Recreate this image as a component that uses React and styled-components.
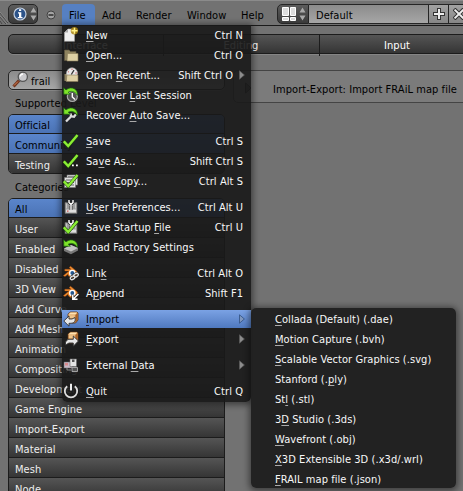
import React from "react";
import styled, { createGlobalStyle, css } from "styled-components";

const Global = createGlobalStyle`
  * { box-sizing: border-box; }
  html, body { margin: 0; background: #727272; overflow: hidden; }
  svg { display: block; flex: none; }
`;

const Screen = styled.div`
  position: relative;
  width: 463px;
  height: 491px;
  overflow: hidden;
  background: #727272;
  color: #000;
  font: 11px/20px "DejaVu Sans Condensed", "DejaVu Sans", sans-serif;
  font-stretch: semi-condensed;
  letter-spacing: 0.06px;
  white-space: nowrap;
`;

const Header = styled.header`
  display: flex;
  align-items: flex-start;
  height: 26px;
  padding-top: 3px;
  border-top: 1px solid #8b8b8b;
  border-bottom: 1px solid #1a1a1a;
`;

const Corner = styled.div`
  flex: none;
  width: 8px;
  height: 20px;
`;

const DarkButton = styled.div`
  display: flex;
  flex: none;
  align-items: center;
  gap: 3px;
  width: ${(p) => p.$width}px;
  height: 20px;
  padding-left: 4px;
  border: 1px solid #252525;
  border-radius: ${(p) => (p.$joined ? "5px 0 0 5px" : "5px")};
  background: linear-gradient(#5c5c5c, #3a3a3a);
`;

const Collapse = styled.div`
  display: flex;
  flex: none;
  align-items: center;
  justify-content: center;
  width: 24px;
  height: 22px;
  padding-left: 2px;
`;

const MenuTitles = styled.nav`
  display: flex;
  flex: none;
  width: 215px;
`;

const MenuTitle = styled.div`
  width: ${(p) => p.$width}px;
  height: 21px;
  padding-left: 7px;
  line-height: 23px;
  border-radius: 4px 4px 0 0;
  background: ${(p) => (p.$open ? "#5680c2" : "transparent")};
`;

const LayoutField = styled.div`
  flex: none;
  width: 120px;
  height: 20px;
  padding-left: 7px;
  line-height: 21px;
  border: 1px solid #252525;
  border-left: 0;
  background: linear-gradient(#8b8b8b, #a6a6a6);
`;

const FieldButton = styled.div`
  display: flex;
  flex: none;
  align-items: center;
  justify-content: center;
  width: 20px;
  height: 20px;
  border: 1px solid #252525;
  border-left: 0;
  background: linear-gradient(#a2a2a2, #878787);
`;

const Tabs = styled.div`
  display: grid;
  grid-template-columns: 155px 156px 156px;
  height: 20px;
  width: 470px;
  margin: 8px 0 0 8px;
  border: 1px solid #1c1c1c;
  border-radius: 5px;
  background: linear-gradient(#555, #353535);
  box-shadow: 0 1px 0 #858585;
`;

const Tab = styled.div`
  padding-right: 1px;
  border-right: 1px solid #1c1c1c;
  color: #fff;
  text-align: center;
  line-height: 21px;
`;

const Body = styled.main`
  display: flex;
  gap: 8px;
  padding: 16px 0 0 8px;
`;

const Sidebar = styled.aside`
  flex: none;
  width: 217px;
`;

const Search = styled.div`
  display: flex;
  gap: 2px;
  height: 20px;
  padding-left: 3px;
  border: 1px solid #252525;
  border-radius: 5px;
  line-height: 21px;
  background: linear-gradient(#8b8b8b, #a6a6a6);
  box-shadow: 0 1px 0 #858585;
`;

const Caption = styled.div`
  height: 24px;
  padding: 4px 0 0 7px;
`;

const List = styled.div`
  border: 1px solid #1c1c1c;
  border-radius: 5px;
  overflow: hidden;
`;

const ListItem = styled.div`
  height: 20px;
  padding-left: 6px;
  border-bottom: 1px solid #1c1c1c;
  line-height: 23px;
  color: ${(p) => (p.$on ? "#000" : "#eee")};
  background: ${(p) => (p.$on ? "linear-gradient(#5a85cb, #4b73b5)" : "linear-gradient(#555, #353535)")};
  &:first-child { height: 19px; line-height: 21px; }
  &:last-child { height: 19px; border-bottom: 0; }
`;

const AddonBox = styled.section`
  display: flex;
  flex: none;
  align-items: center;
  gap: 21px;
  width: 240px;
  height: 33px;
  padding: 3px 0 0 11px;
  border: 1px solid #444;
  border-radius: 5px;
  background: #7b7b7b;
`;

const AddonName = styled.span`
  margin-top: 3px;
`;

const panel = css`
  position: absolute;
  color: #f8f8f8;
  box-shadow: 0 1px 6px 2px rgba(0, 0, 0, 0.45);
`;

const Dropdown = styled.div`
  ${panel}
  left: 62px;
  top: 25px;
  width: 189px;
  height: 377px;
  border-radius: 0 0 5px 5px;
  background: rgba(25, 25, 25, 0.91);
`;

const Submenu = styled.div`
  ${panel}
  left: 251px;
  top: 308px;
  width: 205px;
  height: 180px;
  padding: 1px 0 0 24px;
  border-radius: 5px;
  background: rgba(33, 33, 33, 0.98);
`;

const SubRow = styled.div`
  height: 20px;
  line-height: 21px;
`;

const Row = styled.div`
  display: flex;
  height: ${(p) => (p.$active ? 18 : 20)}px;
  margin: ${(p) => (p.$gap ? 6 : 0) + (p.$active ? 1 : 0)}px 0 ${(p) => (p.$active ? 1 : 0)}px;
  line-height: ${(p) => (p.$active ? 19 : 21)}px;
  align-items: center;
  padding: 0 6px 0 1px;
  color: ${(p) => (p.$active ? "#000" : "inherit")};
  background: ${(p) => (p.$active ? "linear-gradient(#7ba2e4, #4f79bf)" : "transparent")};
`;

const RowLabel = styled.span`
  flex: 1;
  margin-left: 7px;
`;

const Shortcut = styled.span`
  padding-right: ${(p) => (p.$nested ? 6 : 2)}px;
`;

const Key = styled.span`
  text-decoration: underline;
  text-decoration-color: ${(p) => (p.$dark ? "#223" : "#aaa")};
  text-decoration-thickness: 1px;
  text-underline-offset: 2px;
  text-decoration-skip-ink: none;
`;

const Icon = ({ children }) => (
  <svg width="16" height="16" viewBox="0 0 16 16" fill="none">{children}</svg>
);

const Undo = () => (
  <path d="M.8 .8V7.2H7.4L5.2 5.2C8 3.6 12 4.2 14.3 8.2C15.4 2.4 8.6 -1.6 3 2.9Z" fill="#7fe32a" stroke="#17690d" strokeWidth=".7" />
);
const Check = () => (
  <>
    <path d="M1 8.5L5.2 13L14.3 2.5" stroke="#1d4a0a" strokeWidth="3.4" />
    <path d="M.8 8.3L5.2 13L14.5 2" stroke="#8bed35" strokeWidth="2.4" />
  </>
);
const Disk = () => (
  <>
    <path d="M2 3.5H14V14.5H2Z" fill="#9a9a9a" stroke="#666" strokeWidth=".6" />
    <path d="M3 10.5H13V13.5H3Z" fill="#dedede" />
    <path d="M3.5 4.5V9.5M12.5 4.5V9.5" stroke="#c4c4c4" />
    <path d="M6 1V3.5L8 5.5L10 3.5V1M8 5.5V11" stroke="#222" strokeWidth="2.8" />
    <path d="M6 1V3.5L8 5.5L10 3.5V1M8 5.5V11" stroke="#fff" strokeWidth="1.4" />
    <path d="M4 11.5H5.5V12.8H4Z" fill="#c55" />
  </>
);
const Blender = () => (
  <>
    <path d="M.3 10.7L6 6H1.8V4.2H8L6.2 2.5L7.5 1.3L13.6 6.2C17 9.5 12.5 14.4 8.3 12.7C6 12 5 10.7 5 9.3L2 11.6Z" fill="#f08a2c" stroke="#a14d12" strokeWidth=".4" />
    <circle cx="9.3" cy="8" r="3.3" fill="#fff" />
    <circle cx="9.3" cy="8" r="1.9" fill="#235790" />
  </>
);
const Box = () => (
  <>
    <path d="M5 3L7.5 1H14L15 2V9L12.5 12H5Z" fill="#d99a5a" stroke="#5e3413" strokeWidth=".8" />
    <path d="M5.3 3.2L7.7 1.4H14.3L12.3 3.6H5.3Z" fill="#ffe2b0" />
    <path d="M12.5 4L14.7 2V9L12.5 11.5Z" fill="#a86027" />
    <path d="M5.8 4.2H11.8V7H5.8Z" fill="#f0c58b" />
  </>
);
const Chain = () => (
  <>
    <ellipse cx="9.6" cy="12.8" rx="2.4" ry="1.6" transform="rotate(-30 9.6 12.8)" />
    <ellipse cx="13" cy="10.2" rx="2.4" ry="1.6" transform="rotate(-30 13 10.2)" />
  </>
);

const icons = {
  new: (
    <>
      <path d="M1.5 5.5L5 2H11.5V14.3H1.5Z" fill="#eee" stroke="#aaa" strokeWidth=".6" />
      <path d="M1.5 5.5H5V2Z" fill="#aaa" />
      <circle cx="11.4" cy="3.8" r="3.7" fill="#a8820e" opacity=".85" />
      <path d="M11.5 .8V6.8M8.5 3.8H14.5" stroke="#fff28b" strokeWidth="1.5" />
    </>
  ),
  open: (
    <>
      <path d="M1.5 3H6L7.5 4.5H13V13.5H1.5Z" fill="#8d825e" stroke="#5d5540" strokeWidth=".7" />
      <path d="M4.5 6.5H15V14H4Z" fill="#ddd0a4" stroke="#887b57" strokeWidth=".6" />
    </>
  ),
  recent: (
    <>
      <path d="M1.5 7H4V14H1.5Z" fill="#8d825e" />
      <circle cx="9" cy="6.3" r="5.5" fill="#e9e9e9" stroke="#aaa" strokeWidth=".7" />
      <path d="M8.3 7.5L11 3.2" stroke="#333" strokeWidth="1.3" />
      <path d="M9 1.6V3M5 4.5L6 5.2M12.3 6H13.8" stroke="#c44" strokeWidth=".8" />
      <path d="M3.8 8H15V14.5H3.3Z" fill="#ddd0a4" stroke="#887b57" strokeWidth=".6" />
    </>
  ),
  last: (
    <>
      <circle cx="9.3" cy="9.5" r="5" fill="#555" stroke="#aaa" strokeWidth="1.2" />
      <path d="M9.3 6V10L12 12.5" stroke="#fff" strokeWidth="1.4" />
      <Undo />
    </>
  ),
  auto: (
    <>
      <path d="M3 14.5L8 9.5M7.5 6.5L8.2 9.3L11 9.8L12.8 7.3" stroke="#ddd" strokeWidth="2.3" />
      <Undo />
    </>
  ),
  save: <Check />,
  saveAs: (
    <>
      <Check />
      <path d="M9 11.5H10.8V13.3H9ZM13 11.5H14.8V13.3H13Z" fill="#fff" />
    </>
  ),
  copy: (
    <>
      <path d="M4 2H14.5V12H4Z" fill="#e2e2e2" stroke="#777" strokeWidth=".6" />
      <path d="M1.5 4.5H12.5V14.5H1.5Z" fill="#e2e2e2" stroke="#777" strokeWidth=".6" />
      <path d="M5 3.8H13.5M3 7H11M3 9.5H11M3 12H11" stroke="#555" strokeWidth=".9" />
      <Check />
    </>
  ),
  prefs: <Disk />,
  startup: (
    <>
      <Disk />
      <Check />
    </>
  ),
  factory: (
    <>
      <path d="M1 9.5L8 6L15 9V11.5L8 15.3L1 12Z" fill="#777" />
      <path d="M1 9.5L8 6L15 9L8 12.5Z" fill="#c3c3c3" />
      <Undo />
    </>
  ),
  link: (
    <>
      <Blender />
      <g stroke="#222" strokeWidth="2.6"><Chain /></g>
      <g stroke="#e2e2e2" strokeWidth="1.3"><Chain /></g>
    </>
  ),
  append: (
    <>
      <Blender />
      <path d="M15.4 9L10.6 13.7M9.8 9.8V14.3H14.5" stroke="#222" strokeWidth="2.8" />
      <path d="M15.4 9L10.6 13.7M9.8 9.8V14.3H14.5" stroke="#fff" strokeWidth="1.5" />
    </>
  ),
  import: (
    <>
      <Box />
      <path d="M.8 10L6 5V8H9L12 6.5C13 12 10 12.3 6 12.3V15.2Z" fill="#e6e6e6" stroke="#333" strokeWidth=".9" />
    </>
  ),
  export: (
    <>
      <Box />
      <path d="M15.4 10L10.3 5V8.3H5L2.5 11V14L6 12H10.3V15.2Z" fill="#e6e6e6" stroke="#333" strokeWidth=".9" />
    </>
  ),
  external: (
    <>
      <path d="M1 5H9V11H1Z" fill="#c9b9c6" stroke="#666" strokeWidth=".5" />
      <path d="M2 6H5V8.5H2Z" fill="#d8898b" />
      <path d="M7 2H13.5V9.5H7Z" fill="#e4e4e4" stroke="#666" strokeWidth=".6" />
      <path d="M9 2.5H11.5V5H9Z" fill="#555" />
      <path d="M4 11V13H8M12 9V11" stroke="#888" />
      <path d="M9 10.5H14.5V14.5H9Z" fill="#555" stroke="#bbb" strokeWidth=".8" />
    </>
  ),
  quit: (
    <>
      <path d="M4.2 3.2A6.2 6.2 0 1 0 11.8 3.2" stroke="#ddd" strokeWidth="1.8" />
      <path d="M8 .8V7.5" stroke="#eee" strokeWidth="2" />
    </>
  ),
};

const Arrow = ({ active }) => (
  <svg width="6" height="10" viewBox="0 0 6 10">
    <path d="M.5 .8L5.4 5L.5 9.2Z" fill={active ? "#7f97be" : "#8c8c8c"} stroke={active ? "#2f4f82" : "#5a5a5a"} strokeWidth=".8" />
  </svg>
);

const UpDown = () => (
  <svg width="7" height="14" viewBox="0 0 7 14">
    <path d="M3.5 .5L6.5 5.5H.5ZM.5 8.5H6.5L3.5 13.5Z" fill="#aaa" />
  </svg>
);

// An ampersand marks the letter that triggers the entry.
const Mnemonic = ({ text, dark }) => {
  const at = text.indexOf("&");
  return (
    <>
      {text.slice(0, at)}
      <Key $dark={dark}>{text[at + 1]}</Key>
      {text.slice(at + 2)}
    </>
  );
};

const entries = [
  { icon: "new", text: "&New", keys: "Ctrl N" },
  { icon: "open", text: "&Open...", keys: "Ctrl O" },
  { icon: "recent", text: "Open &Recent...", keys: "Shift Ctrl O", nested: true },
  { icon: "last", text: "Recover &Last Session" },
  { icon: "auto", text: "Recover &Auto Save..." },
  { icon: "save", text: "&Save", keys: "Ctrl S", gap: true },
  { icon: "saveAs", text: "Sa&ve As...", keys: "Shift Ctrl S" },
  { icon: "copy", text: "Save &Copy...", keys: "Ctrl Alt S" },
  { icon: "prefs", text: "&User Preferences...", keys: "Ctrl Alt U", gap: true },
  { icon: "startup", text: "Save Startup &File", keys: "Ctrl U" },
  { icon: "factory", text: "Load Fac&tory Settings" },
  { icon: "link", text: "Lin&k", keys: "Ctrl Alt O", gap: true },
  { icon: "append", text: "A&ppend", keys: "Shift F1" },
  { icon: "import", text: "&Import", nested: true, active: true, gap: true },
  { icon: "export", text: "&Export", nested: true },
  { icon: "external", text: "External &Data", nested: true, gap: true },
  { icon: "quit", text: "&Quit", keys: "Ctrl Q", gap: true },
];

const formats = [
  "&Collada (Default) (.dae)", "&Motion Capture (.bvh)", "&Scalable Vector Graphics (.svg)",
  "Stanford (.&ply)", "St&l (.stl)", "3&D Studio (.3ds)", "&Wavefront (.obj)",
  "&X3D Extensible 3D (.x3d/.wrl)", "&FRAIL map file (.json)",
];

const categories = [
  "All", "User", "Enabled", "Disabled", "3D View", "Add Curve", "Add Mesh", "Animation",
  "Compositing", "Development", "Game Engine", "Import-Export", "Material", "Mesh", "Node",
];

const titles = [["File", 33], ["Add", 34], ["Render", 51], ["Window", 54], ["Help", 40]];

export default function App() {
  return (
    <Screen>
      <Global />
      <Header>
        <Corner>
          <svg width="8" height="20" viewBox="0 0 8 20">
            <path d="M0 9L8 19M0 13L6 20M0 17L2 20" stroke="#444" />
            <path d="M0 8L8 18M0 12L7 20" stroke="#999" strokeWidth=".6" />
          </svg>
        </Corner>
        <DarkButton $width={30}>
          <svg width="14" height="14" viewBox="0 0 14 14">
            <circle cx="7" cy="7" r="6" fill="#2c5389" stroke="#c3cfdf" strokeWidth="1.2" />
            <path d="M6 2.2H8.2V4H6ZM5 5.3H8.3V10H9.5V11.3H4.8V10H6V6.5H5Z" fill="#fff" />
          </svg>
          <UpDown />
        </DarkButton>
        <Collapse>
          <svg width="10" height="10" viewBox="0 0 10 10">
            <circle cx="5" cy="5" r="4" fill="#a2a2a2" stroke="#414141" />
            <path d="M2.5 5H7.5" stroke="#222" strokeWidth="1.4" />
          </svg>
        </Collapse>
        <MenuTitles>
          {titles.map(([name, width]) => (
            <MenuTitle key={name} $width={width} $open={name === "File"}>{name}</MenuTitle>
          ))}
        </MenuTitles>
        <DarkButton $width={32} $joined>
          <svg width="14" height="14" viewBox="0 0 14 14">
            <path d="M.5 .5H6.5V8.5H.5ZM.5 10.5H6.5V13.5H.5ZM8.5 .5H13.5V8.5H8.5ZM8.5 10.5H13.5V13.5H8.5Z" fill="#ddd" stroke="#fff" strokeWidth="1" />
          </svg>
          <UpDown />
        </DarkButton>
        <LayoutField>Default</LayoutField>
        <FieldButton>
          <svg width="12" height="12" viewBox="0 0 12 12">
            <path d="M6 0V12M0 6H12" stroke="#333" strokeWidth="4" />
            <path d="M6 1V11M1 6H11" stroke="#eee" strokeWidth="2" />
          </svg>
        </FieldButton>
        <FieldButton>
          <svg width="12" height="12" viewBox="0 0 12 12">
            <path d="M1 1L11 11M11 1L1 11" stroke="#333" strokeWidth="4" />
            <path d="M1.6 1.6L10.4 10.4M10.4 1.6L1.6 10.4" stroke="#eee" strokeWidth="2" />
          </svg>
        </FieldButton>
      </Header>
      <Tabs>
        <Tab>Interface</Tab>
        <Tab>Editing</Tab>
        <Tab>Input</Tab>
      </Tabs>
      <Body>
        <Sidebar>
          <Search>
            <svg width="17" height="17" viewBox="0 0 17 17">
              <path d="M1.5 15.5L7 9.5" stroke="#71341c" strokeWidth="3" />
              <path d="M2 14.5L6 10.5" stroke="#d7835a" />
              <circle cx="10.8" cy="5.8" r="4.6" fill="#c9c9cc" stroke="#555" strokeWidth="1.3" />
              <path d="M8.2 5.5A3 3 0 0 1 11 3" stroke="#fff" strokeWidth="1.3" fill="none" />
            </svg>
            frail
          </Search>
          <Caption>Supported Level</Caption>
          <List>
            <ListItem $on>Official</ListItem>
            <ListItem $on>Community</ListItem>
            <ListItem>Testing</ListItem>
          </List>
          <Caption>Categories</Caption>
          <List>
            {categories.map((name) => (
              <ListItem key={name} $on={name === "All"}>{name}</ListItem>
            ))}
          </List>
        </Sidebar>
        <AddonBox>
          <svg width="7" height="12" viewBox="0 0 7 12">
            <path d="M.6 1L6 6L.6 11Z" fill="#555" stroke="#222" />
          </svg>
          <AddonName>Import-Export: Import FRAiL map file</AddonName>
        </AddonBox>
      </Body>
      <Dropdown>
        {entries.map((e) => (
          <Row key={e.text} $gap={e.gap} $active={e.active}>
            <Icon>{icons[e.icon]}</Icon>
            <RowLabel><Mnemonic text={e.text} dark={e.active} /></RowLabel>
            {e.keys && <Shortcut $nested={e.nested}>{e.keys}</Shortcut>}
            {e.nested && <Arrow active={e.active} />}
          </Row>
        ))}
      </Dropdown>
      <Submenu>
        {formats.map((f) => (
          <SubRow key={f}><Mnemonic text={f} /></SubRow>
        ))}
      </Submenu>
    </Screen>
  );
}
